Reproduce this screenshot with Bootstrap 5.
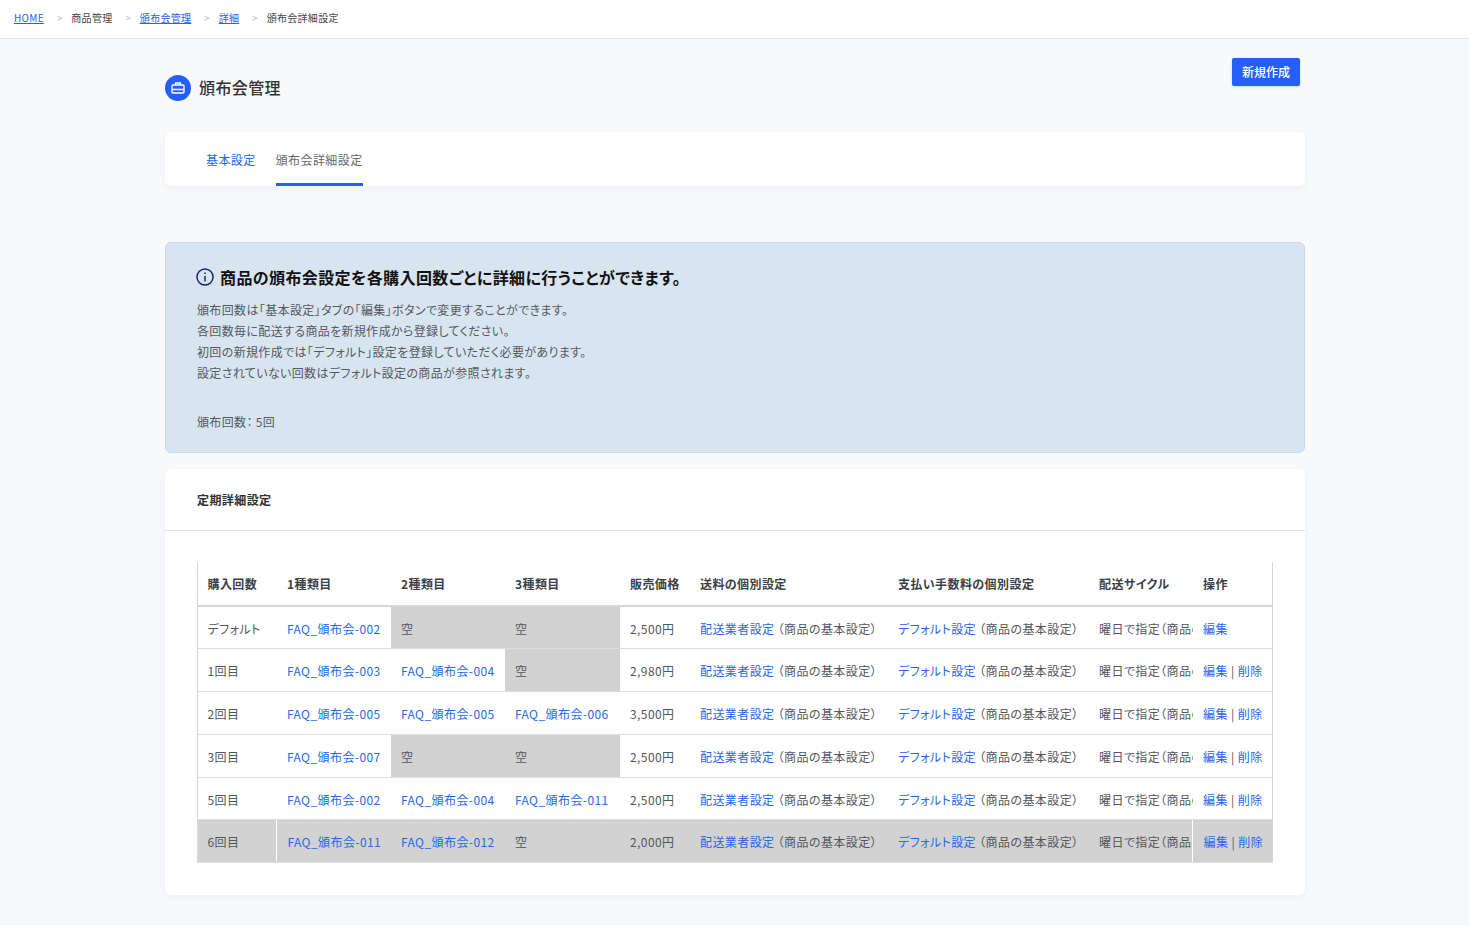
<!DOCTYPE html>
<html lang="ja">
<head>
<meta charset="utf-8">
<title>頒布会管理</title>
<link href="https://cdn.jsdelivr.net/npm/bootstrap@5.3.0/dist/css/bootstrap.min.css" rel="stylesheet">
<style>
body{background:#f7f9fb;font-family:"Noto Sans CJK JP","Noto Sans",sans-serif;color:#54565c;font-size:12px;min-height:925px;letter-spacing:.035em;font-feature-settings:"palt" 1}
a{color:#2867e8}
.crumbbar{height:39px;background:#fff;border-bottom:1px solid #e2e5ec;padding:0 0 3px 14px;font-size:10px;color:#444;letter-spacing:.03em}
.crumbbar a{color:#2563eb}
.crumbsep{color:#b5bac6;margin:0 8.500px 0 13px}
.pagewrap{width:1140px;margin-left:165px}
.headrow{height:93px}
.headbtn{background:#255ffb;color:#fff;font-size:12px;font-weight:500;border:0;border-radius:2px;width:68px;height:28px;padding:0 0 0 0;margin-top:19px;margin-right:5px;box-shadow:0 1px 3px rgba(0,0,0,.15)}
.headicon{width:26px;height:26px;background:#255ffb;border-radius:50%;margin-top:36px}
.headtitle{font-size:16px;font-weight:500;color:#333;margin:35px 0 0 8px;line-height:26px;letter-spacing:.025em}
.tabcard{height:54px;background:#fff;border-radius:6px;box-shadow:0 2px 6px rgba(30,40,70,.05);padding-left:41px;gap:20px}
.tabitem{display:block;height:54px;line-height:55px;text-decoration:none;font-size:12px;color:#2563eb}
.tabitem.current{color:#666;border-bottom:3px solid #255ffb}
.infobox{margin-top:56px;height:211px;background:#d8e5f1;border:1px solid #c5d9ec;border-radius:6px;padding:21px 30px 21px 31px}
.infotitle{font-size:16px;font-weight:700;color:#111;line-height:26px;margin:0 0 9px;letter-spacing:.025em;gap:6px}
.infoglyph{margin-left:-1px}
.infotext{font-size:12px;line-height:21px;margin:0;color:#55585e;letter-spacing:.03em}
.infocount{margin:28px 0 0;line-height:21px;font-size:12px;color:#55585e;letter-spacing:.03em}
.detailcard{margin-top:16px;height:426px;background:#fff;border-radius:6px;box-shadow:0 2px 6px rgba(30,40,70,.05)}
.detailhead{height:62px;line-height:62px;padding-left:32px;border-bottom:1px solid #dfe1e5;font-weight:700;color:#333;font-size:12px}
.detailbody{padding:31px 32px 0}
.kaiTable{table-layout:fixed;width:1075px;margin:0;border-collapse:collapse;font-size:12px;--bs-table-bg:transparent;color:#54565c}
.kaiTable th,.kaiTable td{padding:2px 9px 0 10.500px;height:42.800px;vertical-align:middle;white-space:nowrap;overflow:hidden;border:0;border-bottom:1px solid #ddd;color:#54565c}
.kaiTable th{font-weight:700;color:#3c3f48;border-bottom:2px solid #d6d6d6;height:44px;padding-top:0}
.kaiTable th:first-child,.kaiTable td:first-child{border-left:1px solid #d6d6d6;padding-left:9.500px}
.kaiTable th:last-child,.kaiTable td:last-child{border-right:1px solid #d6d6d6}
.kaiTable a{text-decoration:none;color:#2867e8}
.kaiTable .emptycell,.kaiTable .greyrow td{background:#d2d2d2}
.kaiTable .greyrow td:nth-child(1),.kaiTable .greyrow td:nth-child(8){border-right:1px solid #fff}
</style>
</head>
<body>
<div class="crumbbar d-flex align-items-center">
<a href="#">HOME</a><span class="crumbsep">&gt;</span><span>商品管理</span><span class="crumbsep">&gt;</span><a href="#">頒布会管理</a><span class="crumbsep">&gt;</span><a href="#">詳細</a><span class="crumbsep">&gt;</span><span>頒布会詳細設定</span>
</div>
<div class="pagewrap">
<div class="headrow d-flex justify-content-between align-items-start">
<div class="d-flex">
<div class="headicon d-flex align-items-center justify-content-center">
<svg width="14" height="12" viewBox="0 0 14 12" fill="none" stroke="#fff" stroke-width="1.3"><rect x="1" y="3" width="12" height="8" rx="1"/><path d="M4.500 3V1h5v2M1 7.500h12"/></svg>
</div>
<h1 class="headtitle">頒布会管理</h1>
</div>
<button class="headbtn" type="button">新規作成</button>
</div>
<div class="tabcard d-flex">
<a class="tabitem" href="#">基本設定</a>
<a class="tabitem current" href="#">頒布会詳細設定</a>
</div>
<div class="infobox">
<h2 class="infotitle d-flex align-items-center">
<svg class="infoglyph" width="18" height="18" viewBox="0 0 18 18" fill="none" stroke="#12296b" stroke-width="1.500"><circle cx="9" cy="9" r="8"/><path d="M9 8v5.500"/><path d="M9 4.500v1.600"/></svg>
<span>商品の頒布会設定を各購入回数ごとに詳細に行うことができます。</span>
</h2>
<p class="infotext">頒布回数は「基本設定」タブの「編集」ボタンで変更することができます。<br>各回数毎に配送する商品を新規作成から登録してください。<br>初回の新規作成では「デフォルト」設定を登録していただく必要があります。<br>設定されていない回数はデフォルト設定の商品が参照されます。</p>
<p class="infocount">頒布回数： 5回</p>
</div>
<div class="detailcard">
<div class="detailhead">定期詳細設定</div>
<div class="detailbody">
<table class="table kaiTable">
<colgroup><col style="width:79px"><col style="width:114px"><col style="width:114px"><col style="width:115px"><col style="width:70px"><col style="width:198px"><col style="width:201px"><col style="width:104px"><col style="width:80px"></colgroup>
<thead><tr><th>購入回数</th><th>1種類目</th><th>2種類目</th><th>3種類目</th><th>販売価格</th><th>送料の個別設定</th><th>支払い手数料の個別設定</th><th>配送サイクル</th><th>操作</th></tr></thead>
<tbody>
<tr><td>デフォルト</td><td><a href="#">FAQ_頒布会-002</a></td><td class="emptycell">空</td><td class="emptycell">空</td><td>2,500円</td><td><a href="#">配送業者設定</a> （商品の基本設定）</td><td><a href="#">デフォルト設定</a> （商品の基本設定）</td><td>曜日で指定（商品の基本設定）</td><td><a href="#">編集</a></td></tr>
<tr><td>1回目</td><td><a href="#">FAQ_頒布会-003</a></td><td><a href="#">FAQ_頒布会-004</a></td><td class="emptycell">空</td><td>2,980円</td><td><a href="#">配送業者設定</a> （商品の基本設定）</td><td><a href="#">デフォルト設定</a> （商品の基本設定）</td><td>曜日で指定（商品の基本設定）</td><td><a href="#">編集</a> | <a href="#">削除</a></td></tr>
<tr><td>2回目</td><td><a href="#">FAQ_頒布会-005</a></td><td><a href="#">FAQ_頒布会-005</a></td><td><a href="#">FAQ_頒布会-006</a></td><td>3,500円</td><td><a href="#">配送業者設定</a> （商品の基本設定）</td><td><a href="#">デフォルト設定</a> （商品の基本設定）</td><td>曜日で指定（商品の基本設定）</td><td><a href="#">編集</a> | <a href="#">削除</a></td></tr>
<tr><td>3回目</td><td><a href="#">FAQ_頒布会-007</a></td><td class="emptycell">空</td><td class="emptycell">空</td><td>2,500円</td><td><a href="#">配送業者設定</a> （商品の基本設定）</td><td><a href="#">デフォルト設定</a> （商品の基本設定）</td><td>曜日で指定（商品の基本設定）</td><td><a href="#">編集</a> | <a href="#">削除</a></td></tr>
<tr><td>5回目</td><td><a href="#">FAQ_頒布会-002</a></td><td><a href="#">FAQ_頒布会-004</a></td><td><a href="#">FAQ_頒布会-011</a></td><td>2,500円</td><td><a href="#">配送業者設定</a> （商品の基本設定）</td><td><a href="#">デフォルト設定</a> （商品の基本設定）</td><td>曜日で指定（商品の基本設定）</td><td><a href="#">編集</a> | <a href="#">削除</a></td></tr>
<tr class="greyrow"><td>6回目</td><td><a href="#">FAQ_頒布会-011</a></td><td><a href="#">FAQ_頒布会-012</a></td><td>空</td><td>2,000円</td><td><a href="#">配送業者設定</a> （商品の基本設定）</td><td><a href="#">デフォルト設定</a> （商品の基本設定）</td><td>曜日で指定（商品の基本設定）</td><td><a href="#">編集</a> | <a href="#">削除</a></td></tr>
</tbody>
</table>
</div>
</div>
</div>
<script src="https://cdn.jsdelivr.net/npm/bootstrap@5.3.0/dist/js/bootstrap.bundle.min.js"></script>
</body>
</html>
